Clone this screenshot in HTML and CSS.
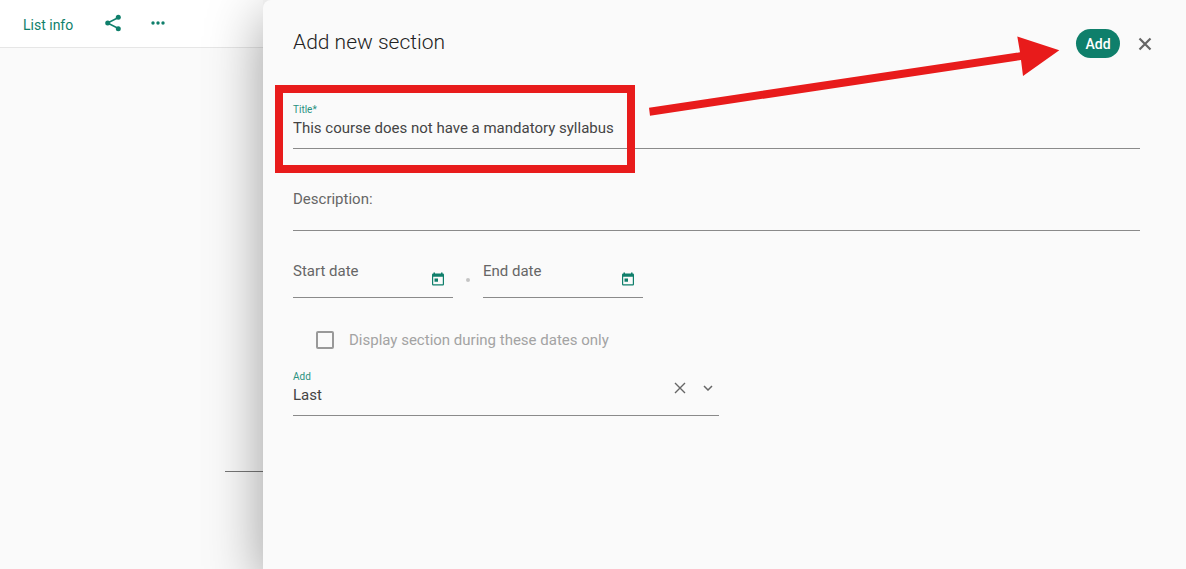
FILE: index.html
```
<!DOCTYPE html>
<html lang="en">
<head>
<meta charset="utf-8">
<title>Add new section</title>
<link rel="stylesheet" href="styles.css">
</head>
<body>
<div class="page">
  <div class="list">
    <nav class="topbar">
      <a class="list-info" href="#">List info</a>
      <button class="icon-button share" type="button" aria-label="Share">
        <svg width="18" height="18" viewBox="0 0 18 18"><path d="M14.5 3.5 3.5 9l11 5.500" fill="none" stroke="currentColor" stroke-width="1.500"/><circle cx="14.300" cy="3.300" r="2.500" fill="currentColor"/><circle cx="3.700" cy="9" r="2.500" fill="currentColor"/><circle cx="14.300" cy="14.700" r="2.500" fill="currentColor"/></svg>
      </button>
      <button class="icon-button" type="button" aria-label="More options">
        <svg width="18" height="18" viewBox="0 0 18 18" fill="currentColor"><circle cx="4" cy="9" r="1.700"/><circle cx="9" cy="9" r="1.700"/><circle cx="14" cy="9" r="1.700"/></svg>
      </button>
    </nav>
    <div class="list-body"><hr class="list-line"></div>
  </div>

  <main class="drawer">
    <header class="drawer-header">
      <h1>Add new section</h1>
      <button class="add-button" type="submit" form="section-form">Add</button>
      <button class="icon-button close" type="button" aria-label="Close">
        <svg width="14" height="14" viewBox="0 0 14 14"><path d="m1.500 1.500 11 11m0-11-11 11" stroke="currentColor" stroke-width="2.200"/></svg>
      </button>
    </header>

    <form id="section-form" class="form">
      <div class="field">
        <label class="small-label" for="title">Title*</label>
        <input id="title" type="text" value="This course does not have a mandatory syllabus">
      </div>
      <div class="field description">
        <label for="description">Description:</label>
        <input id="description" type="text">
      </div>
      <div class="dates">
        <div class="field date">
          <div class="date-text">
            <label for="start">Start date</label>
            <input id="start" type="text">
          </div>
          <button class="icon-button" type="button" aria-label="Choose start date">
            <svg width="12" height="14" viewBox="0 0 12 14"><path fill="currentColor" fill-rule="evenodd" d="M1.500.5h1.500v1h6v-1h1.500v1h.3q1.200 0 1.200 1.200v9.600q0 1.200-1.200 1.200H1.200Q0 13.500 0 12.300V2.700q0-1.200 1.200-1.200h.3zM1.200 4.800v7.500h9.600V4.800zM2.500 6.500h3.500v3.300H2.500z"/></svg>
          </button>
        </div>
        <span class="dot"></span>
        <div class="field date">
          <div class="date-text">
            <label for="end">End date</label>
            <input id="end" type="text">
          </div>
          <button class="icon-button" type="button" aria-label="Choose end date">
            <svg width="12" height="14" viewBox="0 0 12 14"><path fill="currentColor" fill-rule="evenodd" d="M1.500.5h1.500v1h6v-1h1.500v1h.3q1.200 0 1.200 1.200v9.600q0 1.200-1.200 1.200H1.200Q0 13.500 0 12.300V2.700q0-1.200 1.200-1.200h.3zM1.200 4.800v7.500h9.600V4.800zM2.500 6.500h3.500v3.300H2.500z"/></svg>
          </button>
        </div>
      </div>
      <div class="check">
        <input id="only" type="checkbox" disabled>
        <label for="only">Display section during these dates only</label>
      </div>
      <div class="field position">
        <div class="position-text">
          <label class="small-label" for="position">Add</label>
          <select id="position"><option>Last</option></select>
        </div>
        <div class="position-icons">
          <button class="icon-button grey" type="button" aria-label="Clear">
            <svg width="12" height="12" viewBox="0 0 12 12"><path d="m1 1 10 10M11 1 1 11" stroke="currentColor" stroke-width="1.400"/></svg>
          </button>
          <svg class="grey" width="10" height="6" viewBox="0 0 10 6"><path d="m1 1 4 4 4-4" fill="none" stroke="currentColor" stroke-width="1.500"/></svg>
        </div>
      </div>
    </form>
  </main>

  <div class="highlight"></div>
  <svg class="arrow" width="412" height="82" viewBox="0 0 412 82"><path fill="#e81b1b" d="M1 71.700 372 16.300 369.300.5l42 13.800L375 40l-2-16L2 79.700z"/></svg>
</div>
</body>
</html>
```
FILE: styles.css
```
* { box-sizing: border-box; }

body {
  margin: 0;
  background: #fafafa;
  color: #444;
  font: 15px/20px Roboto, "Liberation Sans", sans-serif;
}

button, input, select {
  margin: 0;
  padding: 0;
  border: 0;
  background: none;
  color: inherit;
  font: inherit;
}

svg { display: block; }

.page {
  position: relative;
  display: flex;
  min-height: 100vh;
  overflow: hidden;
}

.list {
  flex: 0 0 263px;
  display: flex;
  flex-direction: column;
}

.topbar {
  display: flex;
  align-items: center;
  height: 48px;
  padding: 0 0 2px 23px;
  background: #fff;
  border-bottom: 1px solid #e6e6e6;
  color: #0f7f6b;
}

.list-info {
  padding-top: 5px;
  color: inherit;
  font-size: 14px;
  text-decoration: none;
}

.icon-button {
  display: grid;
  place-items: center;
  color: #0f7f6b;
}

.share { margin: 0 27px 0 31px; }

.list-body { padding: 423px 0 0 225px; }

.list-line {
  margin: 0;
  border: 0;
  border-top: 1px solid #777;
}

.drawer {
  flex: 1;
  padding: 26px 46px 40px 30px;
  background: #fafafa;
  border-top-left-radius: 8px;
  box-shadow: 0 16px 56px rgba(0, 0, 0, 0.38);
}

.drawer-header {
  display: flex;
  align-items: center;
  height: 35px;
  margin-right: -12px;
}

h1 {
  flex: 1;
  margin: 0;
  padding-bottom: 4px;
  color: #222;
  font-size: 21px;
  font-weight: 300;
  line-height: 28px;
}

.add-button {
  width: 44px;
  height: 29px;
  margin-right: 18px;
  border-radius: 15px;
  background: #0f7f6b;
  color: #fff;
  font-size: 14px;
  font-weight: 500;
}

.close, .grey { color: #666; }

.form { padding-top: 43px; }

.field { border-bottom: 1px solid #8a8a8a; }

.field input, .field select {
  display: block;
  width: 100%;
  height: 20px;
}

.field label {
  display: block;
  color: #666;
}

.field .small-label {
  color: #2b9180;
  font-size: 10px;
  line-height: 12px;
}

#title {
  height: 24px;
  margin-bottom: 8px;
}

.description { padding-top: 40px; }

.field #description { height: 21px; }

.dates {
  display: flex;
  align-items: center;
  padding-top: 30px;
}

.date {
  display: flex;
  align-items: center;
  width: 160px;
  padding-right: 9px;
}

.date-text { flex: 1; }

.date-text input { height: 16px; }

.dot {
  width: 4px;
  height: 4px;
  margin: 0 13px;
  border-radius: 50%;
  background: #c4c4c4;
}

.check {
  display: flex;
  align-items: center;
  gap: 15px;
  padding: 32px 0 21px 23px;
  color: #a3a3a3;
}

.check input {
  appearance: none;
  width: 18px;
  height: 18px;
  border: 2px solid #999;
  border-radius: 2px;
}

.position {
  display: flex;
  align-items: center;
  width: 426px;
  max-width: 100%;
  padding-right: 6px;
}

.position-text { flex: 1; }

.position select {
  appearance: none;
  height: 24px;
  margin-bottom: 8px;
}

.position-icons {
  display: flex;
  align-items: center;
  gap: 17px;
  padding-bottom: 11px;
}

.highlight {
  position: absolute;
  left: 275px;
  top: 85px;
  width: 360px;
  height: 88px;
  border: 8px solid #e81b1b;
  pointer-events: none;
}

.arrow {
  position: absolute;
  left: 648px;
  top: 36px;
  overflow: visible;
  pointer-events: none;
}
```
